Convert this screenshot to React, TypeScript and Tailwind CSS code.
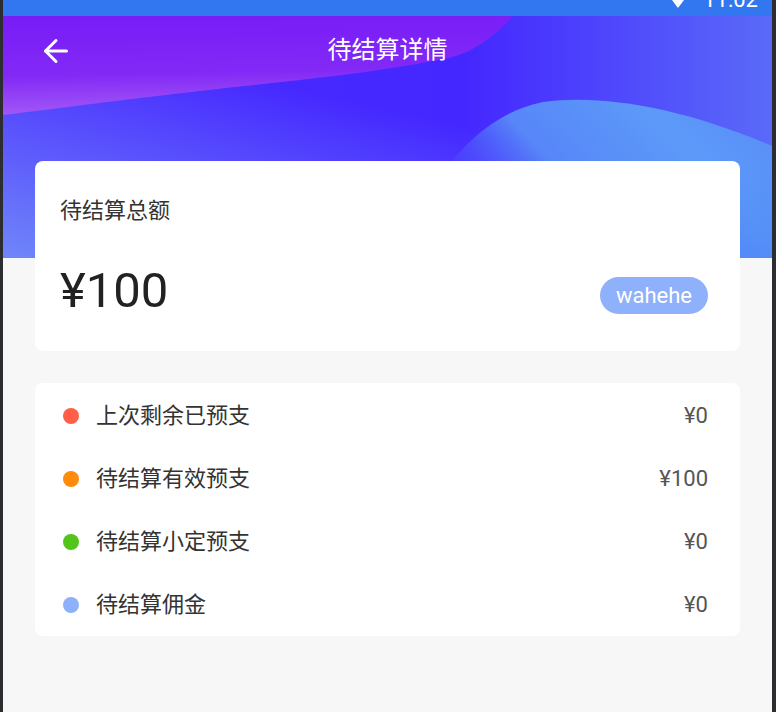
import { ArrowLeft } from 'lucide-react';

const rows = [
  { label: '上次剩余已预支', amount: '¥0', dot: 'bg-[#fe5f46]' },
  { label: '待结算有效预支', amount: '¥100', dot: 'bg-[#ff8a0c]' },
  { label: '待结算小定预支', amount: '¥0', dot: 'bg-[#52c41a]' },
  { label: '待结算佣金', amount: '¥0', dot: 'bg-[#8fb0fb]' },
];

function HeaderArt() {
  return (
    <svg
      className="absolute inset-0 h-full w-full"
      viewBox="0 0 769 242"
      preserveAspectRatio="none"
    >
      <defs>
        <linearGradient id="base" x1="0" y1="0" x2="1" y2="0">
          <stop offset="0" stopColor="#4a2cff" />
          <stop offset="0.6" stopColor="#4427ff" />
          <stop offset="1" stopColor="#5a6af8" />
        </linearGradient>
        <linearGradient id="glowLeft" x1="0" y1="1" x2="0.45" y2="0.35">
          <stop offset="0" stopColor="#6f86f9" stopOpacity="1" />
          <stop offset="1" stopColor="#6f86f9" stopOpacity="0" />
        </linearGradient>
        <linearGradient id="purple" x1="0" y1="0" x2="0.1" y2="1">
          <stop offset="0" stopColor="#781cf6" />
          <stop offset="0.6" stopColor="#8229f6" />
          <stop offset="1" stopColor="#a258f5" />
        </linearGradient>
        <linearGradient id="hill" x1="0" y1="0.7" x2="1" y2="0.3">
          <stop offset="0" stopColor="#4a3cff" stopOpacity="0" />
          <stop offset="0.22" stopColor="#4d5cfc" stopOpacity="0.2" />
          <stop offset="0.45" stopColor="#5786f8" />
          <stop offset="0.8" stopColor="#5c9af8" />
          <stop offset="1" stopColor="#5a90f8" />
        </linearGradient>
        <linearGradient id="hillShade" x1="0" y1="0" x2="0" y2="1">
          <stop offset="0" stopColor="#4d84f7" stopOpacity="0" />
          <stop offset="1" stopColor="#4d84f7" stopOpacity="1" />
        </linearGradient>
      </defs>
      <rect width="769" height="242" fill="url(#base)" />
      <rect width="769" height="242" fill="url(#glowLeft)" />
      <path
        d="M0,0 H510 C490,22 470,36 446,42 C380,55 330,60 297,64 C220,72 150,80 0,99 Z"
        fill="url(#purple)"
      />
      <path
        d="M400,242 C420,170 470,100 540,86 C600,78 680,92 769,130 V242 Z"
        fill="url(#hill)"
      />
      <path d="M480,242 C500,180 560,150 769,150 V242 Z" fill="url(#hillShade)" opacity="0.6" />
    </svg>
  );
}

export default function App() {
  return (
    <div
      className="flex h-[712px] w-full bg-[#2b2d31] pl-[3px] pr-[4px]"
      style={{ fontFamily: "Roboto, 'Noto Sans CJK SC', sans-serif" }}
    >
      <div className="flex-1 bg-[#f7f7f7] overflow-hidden">
        <div className="flex h-[16px] items-start justify-end overflow-hidden bg-[#3277ef] pr-[14px]">
          <svg width="12" height="8" viewBox="0 0 12 8" className="mr-[19px]">
            <path d="M0,0 H12 L6.6,7.2 Q6,7.8 5.4,7.2 Z" fill="#fff" />
          </svg>
          <span className="mt-[-11.5px] text-[22px] leading-[22px] text-white">11:02</span>
        </div>

        <div className="relative h-[242px]">
          <HeaderArt />
          <div className="relative flex h-[68px] items-center px-[35px]">
            <ArrowLeft className="text-white mt-[2px]" size={36} strokeWidth={2} />
            <h1 className="flex-1 text-center text-[24px] text-white pr-[36px]">待结算详情</h1>
          </div>
        </div>

        <div className="relative mx-[32px] -mt-[97px]">
          <div className="rounded-lg bg-white px-[25px] pt-[34px] pb-[32px]">
            <p className="text-[22px] leading-[32px] text-[#333]">待结算总额</p>
            <div className="mt-[36px] flex items-start justify-between">
              <span className="text-[49px] leading-[56px] text-[#222]">¥100</span>
              <span className="mt-[14px] mr-[7px] flex h-[37px] items-center rounded-full bg-[#8fb0fa] px-[16px] text-[22px] text-white">
                wahehe
              </span>
            </div>
          </div>

          <div className="mt-[32px] rounded-lg bg-white pt-[1px] pl-[28px] pr-[32px]">
            {rows.map((r) => (
              <div key={r.label} className="flex h-[63px] items-center">
                <span className={`h-[16px] w-[16px] rounded-full ${r.dot}`} />
                <span className="ml-[17px] flex-1 text-[22px] text-[#333]">{r.label}</span>
                <span className="text-[22px] text-[#555]">{r.amount}</span>
              </div>
            ))}
          </div>
        </div>
      </div>
    </div>
  );
}
